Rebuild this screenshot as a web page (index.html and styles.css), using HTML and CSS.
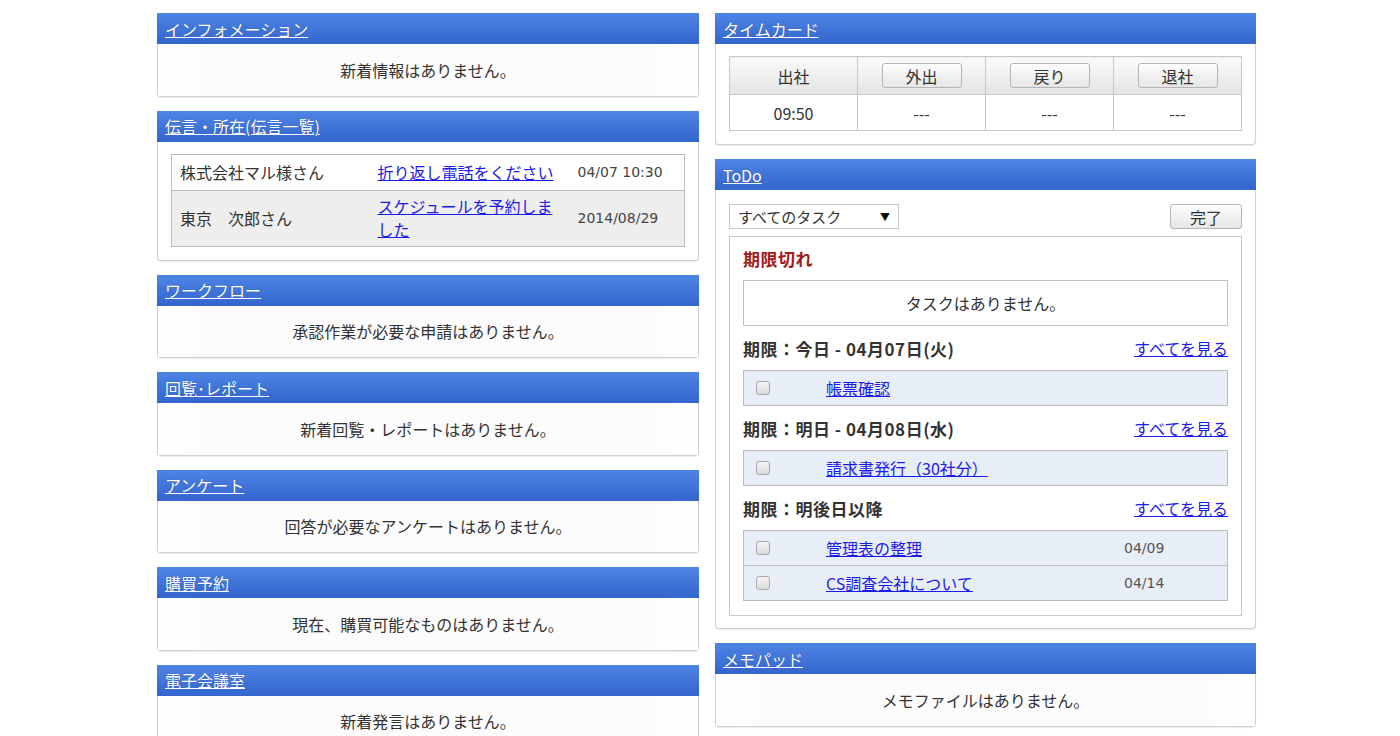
FILE: index.html
```html
<!DOCTYPE html>
<html lang="ja">
<head>
    <meta charset="UTF-8">
    <title>ポータル</title>
    <link rel="stylesheet" href="styles.css">
</head>
<body>
    <div class="dashboard">
        <div class="column">
            <div class="portlet">
                <div class="portlet-header"><a href="#">インフォメーション</a></div>
                <div class="portlet-empty">新着情報はありません。</div>
            </div>

            <div class="portlet">
                <div class="portlet-header"><a href="#">伝言・所在(伝言一覧)</a></div>
                <div class="portlet-body">
                    <table class="message-table">
                        <tr>
                            <td class="msg-from">株式会社マル様さん</td>
                            <td class="msg-text"><a href="#">折り返し電話をください</a></td>
                            <td class="msg-date">04/07 10:30</td>
                        </tr>
                        <tr class="alt">
                            <td class="msg-from">東京　次郎さん</td>
                            <td class="msg-text"><a href="#">スケジュールを予約しました</a></td>
                            <td class="msg-date">2014/08/29</td>
                        </tr>
                    </table>
                </div>
            </div>

            <div class="portlet">
                <div class="portlet-header"><a href="#">ワークフロー</a></div>
                <div class="portlet-empty">承認作業が必要な申請はありません。</div>
            </div>

            <div class="portlet">
                <div class="portlet-header"><a href="#">回覧･レポート</a></div>
                <div class="portlet-empty">新着回覧・レポートはありません。</div>
            </div>

            <div class="portlet">
                <div class="portlet-header"><a href="#">アンケート</a></div>
                <div class="portlet-empty">回答が必要なアンケートはありません。</div>
            </div>

            <div class="portlet">
                <div class="portlet-header"><a href="#">購買予約</a></div>
                <div class="portlet-empty">現在、購買可能なものはありません。</div>
            </div>

            <div class="portlet">
                <div class="portlet-header"><a href="#">電子会議室</a></div>
                <div class="portlet-empty">新着発言はありません。</div>
            </div>
        </div>

        <div class="column">
            <div class="portlet">
                <div class="portlet-header"><a href="#">タイムカード</a></div>
                <div class="portlet-body">
                    <table class="timecard">
                        <tr>
                            <th>出社</th>
                            <th><button class="btn">外出</button></th>
                            <th><button class="btn">戻り</button></th>
                            <th><button class="btn">退社</button></th>
                        </tr>
                        <tr>
                            <td>09:50</td>
                            <td>---</td>
                            <td>---</td>
                            <td>---</td>
                        </tr>
                    </table>
                </div>
            </div>

            <div class="portlet">
                <div class="portlet-header"><a href="#">ToDo</a></div>
                <div class="portlet-body todo-body">
                    <div class="todo-toolbar">
                        <div class="select-box">すべてのタスク<span class="select-arrow">▼</span></div>
                        <button class="btn btn-done">完了</button>
                    </div>
                    <div class="todo-list">
                        <div class="todo-heading overdue">期限切れ</div>
                        <div class="todo-none">タスクはありません。</div>

                        <div class="todo-heading">
                            <span>期限：今日 - 04月07日(火)</span>
                            <a href="#" class="see-all">すべてを見る</a>
                        </div>
                        <div class="task-group">
                            <div class="task-row">
                                <span class="check"></span>
                                <a href="#" class="task-name">帳票確認</a>
                            </div>
                        </div>

                        <div class="todo-heading">
                            <span>期限：明日 - 04月08日(水)</span>
                            <a href="#" class="see-all">すべてを見る</a>
                        </div>
                        <div class="task-group">
                            <div class="task-row">
                                <span class="check"></span>
                                <a href="#" class="task-name">請求書発行（30社分）</a>
                            </div>
                        </div>

                        <div class="todo-heading">
                            <span>期限：明後日以降</span>
                            <a href="#" class="see-all">すべてを見る</a>
                        </div>
                        <div class="task-group">
                            <div class="task-row">
                                <span class="check"></span>
                                <a href="#" class="task-name">管理表の整理</a>
                                <span class="task-date">04/09</span>
                            </div>
                            <div class="task-row">
                                <span class="check"></span>
                                <a href="#" class="task-name">CS調査会社について</a>
                                <span class="task-date">04/14</span>
                            </div>
                        </div>
                    </div>
                </div>
            </div>

            <div class="portlet">
                <div class="portlet-header"><a href="#">メモパッド</a></div>
                <div class="portlet-empty">メモファイルはありません。</div>
            </div>
        </div>
    </div>
</body>
</html>
```

FILE: styles.css
```css
* {
    box-sizing: border-box;
    margin: 0;
    padding: 0;
}

body {
    font-family: "Noto Sans CJK JP", "Noto Sans", sans-serif;
    font-size: 16px;
    color: #333;
    background: #fff;
    overflow: hidden;
}

a {
    color: #1a1aee;
}

.dashboard {
    width: 1099px;
    margin: 13px 0 0 calc(50% - 543px);
    display: grid;
    grid-template-columns: 542px 541px;
    column-gap: 16px;
    align-items: start;
}

.column {
    display: flex;
    flex-direction: column;
    gap: 14px;
}

/* portlet frame */
.portlet {
    border: 1px solid #d0d0d0;
    border-top: none;
    border-radius: 0 0 4px 4px;
    box-shadow: 0 1px 1px rgba(0,0,0,0.08);
    background: #fff;
}

.portlet-header {
    height: 31px;
    margin: 0 -1px;
    padding: 0 8px;
    background: linear-gradient(#4e85e4, #3365cd);
    display: flex;
    align-items: center;
}

.portlet-header a {
    color: #fff;
    font-size: 16px;
    line-height: 1;
    text-shadow: 0 0 1px rgba(0,0,0,0.3);
}

.portlet-empty {
    height: 51.5px;
    display: flex;
    align-items: center;
    justify-content: center;
    background: linear-gradient(90deg, #fff, #fcfcfc 10%, #fcfcfc 90%, #fff);
}

.portlet-body {
    padding: 12px 13px 13px;
}

/* messages */
.message-table {
    width: 100%;
    border-collapse: collapse;
    border: 1px solid #bbb;
}

.message-table td {
    border-top: 1px solid #bbb;
    padding: 0 8px;
    height: 36px;
    line-height: 23px;
}

.message-table tr.alt {
    background: #eee;
}

.message-table tr.alt td {
    height: 56px;
}

.msg-from {
    width: 198px;
}

.msg-text {
    width: 200px;
}

.msg-date {
    font-family: "DejaVu Sans", sans-serif;
    font-size: 14px;
    color: #444;
}

/* timecard */
.timecard {
    width: 100%;
    border-collapse: collapse;
    border: 1px solid #c8c8c8;
    table-layout: fixed;
}

.timecard th,
.timecard td {
    border: 1px solid #c8c8c8;
    text-align: center;
    font-weight: normal;
}

.timecard th {
    height: 38px;
    background: linear-gradient(#fafafa, #e4e4e4);
}

.timecard td {
    height: 36px;
}

.btn {
    font-family: inherit;
    font-size: 16px;
    color: #333;
    width: 80px;
    height: 25px;
    border: 1px solid #b4b4b4;
    border-radius: 3px;
    background: linear-gradient(#fdfdfd, #e6e6e6);
    line-height: 1;
}

/* todo */
.todo-body {
    padding-top: 14px;
    padding-bottom: 12px;
}

.todo-toolbar {
    display: flex;
    justify-content: space-between;
    margin-bottom: 7px;
}

.select-box {
    width: 170px;
    height: 25px;
    border: 1px solid #c8c8c8;
    padding: 0 8px;
    font-size: 15px;
    display: flex;
    align-items: center;
    justify-content: space-between;
}

.select-arrow {
    font-size: 10px;
    color: #111;
}

.btn-done {
    width: 72px;
}

.todo-list {
    border: 1px solid #c8c8c8;
    padding: 0 13px 14px;
}

.todo-heading {
    height: 44px;
    font-size: 17px;
    font-weight: bold;
    letter-spacing: 0.5px;
    display: flex;
    align-items: center;
    justify-content: space-between;
}

.todo-heading.overdue {
    height: 43px;
    color: #a31a1a;
}

.see-all {
    font-size: 16px;
    font-weight: normal;
    letter-spacing: 0;
}

.todo-none {
    height: 46px;
    border: 1px solid #c0c0c0;
    display: flex;
    align-items: center;
    justify-content: center;
}

.task-group {
    border: 1px solid #bbb;
    background: #e8eef7;
}

.task-row {
    height: 34px;
    display: flex;
    align-items: center;
    padding-left: 12px;
}

.task-row + .task-row {
    height: 35px;
    border-top: 1px solid #c0c0c0;
}

.check {
    width: 14px;
    height: 14px;
    border: 1px solid #aaa;
    border-radius: 3px;
    background: linear-gradient(#f4f4f4, #dcdcdc);
}

.task-name {
    margin-left: 56px;
    width: 298px;
}

.task-date {
    font-family: "DejaVu Sans", sans-serif;
    font-size: 14px;
    color: #555;
}
```
